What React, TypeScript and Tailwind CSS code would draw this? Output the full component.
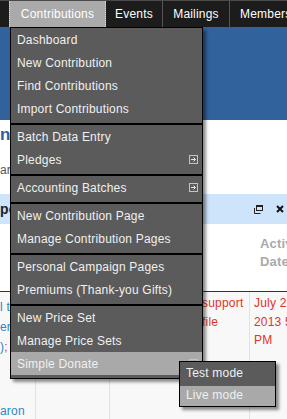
import React from "react";

type Item = { label: string; sub?: boolean; active?: boolean };

const groups: Item[][] = [
  [
    { label: "Dashboard" },
    { label: "New Contribution" },
    { label: "Find Contributions" },
    { label: "Import Contributions" },
  ],
  [{ label: "Batch Data Entry" }, { label: "Pledges", sub: true }],
  [{ label: "Accounting Batches", sub: true }],
  [{ label: "New Contribution Page" }, { label: "Manage Contribution Pages" }],
  [{ label: "Personal Campaign Pages" }, { label: "Premiums (Thank-you Gifts)" }],
  [
    { label: "New Price Set" },
    { label: "Manage Price Sets" },
    { label: "Simple Donate", sub: true, active: true },
  ],
];

function SubArrow() {
  return (
    <svg width="9" height="9" viewBox="0 0 9 9" className="block">
      <rect x="0.5" y="0.5" width="8" height="8" fill="none" stroke="#c4c4c4" />
      <path d="M2 4.5h4.5M4.5 2.5l2 2-2 2" fill="none" stroke="#e6e6e6" />
    </svg>
  );
}

function RestoreIcon() {
  return (
    <svg width="9" height="9" viewBox="0 0 9 9" className="block">
      <rect x="2.5" y="0.5" width="6" height="5" fill="none" stroke="#222" />
      <rect x="2.5" y="0.5" width="6" height="1.5" fill="#222" />
      <path d="M0.5 3v5.5h6" fill="none" stroke="#222" />
    </svg>
  );
}

function CloseIcon() {
  return (
    <svg width="8" height="8" viewBox="0 0 8 8" className="block">
      <path d="M1 1l6 6M7 1l-6 6" stroke="#111" strokeWidth="2" />
    </svg>
  );
}

export default function App() {
  return (
    <div className="relative h-[419px] w-[287px] overflow-hidden bg-white font-['Liberation_Sans',Arial,sans-serif] text-[12px] tracking-[0.2px]">
      {/* TOP NAV */}
      <div className="flex h-[27px] border-t border-[#4a4a4a] bg-[#1c1c1c] text-white">
        <div className="w-[9px] shrink-0" />
        <div className="flex w-[97px] shrink-0 items-center justify-center border-x border-dotted border-[#d8d8d8] bg-[#aaaaaa]">
          Contributions
        </div>
        <div className="flex w-[57px] shrink-0 items-center justify-center border-r border-[#555]">Events</div>
        <div className="flex w-[67px] shrink-0 items-center justify-center border-r border-[#555]">Mailings</div>
        <div className="flex shrink-0 items-center whitespace-nowrap pl-[10px]">Members</div>
      </div>

      {/* PAGE BEHIND THE MENU */}
      <div className="h-[93px] bg-[#31629b]" />
      <div className="pt-[4px] text-[17px] font-bold leading-[22px] text-[#2c5f97]">n</div>
      <div className="mt-[15px] leading-[18px] text-[#555]">ar</div>
      <div className="mt-[15px] flex h-[30px] items-center justify-between bg-[#cde4fa] pr-[3px]">
        <span className="text-[14px] font-bold text-[#222]">po</span>
        <div className="flex items-center gap-[13px]">
          <RestoreIcon />
          <CloseIcon />
        </div>
      </div>

      <div className="grid h-[68px] grid-cols-[36px_74px_140px_1fr] border-b border-[#333]">
        <div />
        <div />
        <div />
        <div className="whitespace-nowrap pl-[10px] pt-[11px] text-[13px] font-bold leading-[18px] text-[#aaaaaa]">
          <div>Active</div>
          <div>Date</div>
        </div>
      </div>

      <div className="grid h-[130px] grid-cols-[36px_74px_140px_1fr] bg-[#f8f8f8] leading-[20px]">
        <div className="whitespace-nowrap border-r border-[#e2e2e2] pt-[5px] text-[#2a87c6]">
          <div>l to</div>
          <div>ern</div>
          <div>
            )<span className="text-[#e0332a]">;</span>
          </div>
          <div className="mt-[44px]">aron</div>
        </div>
        <div className="border-r border-[#e2e2e2]" />
        <div className="border-r border-[#e2e2e2] pl-[92px] pt-[2px] leading-[18.5px] text-[#e0332a]">
          <div>support</div>
          <div>file</div>
        </div>
        <div className="whitespace-nowrap pl-[4px] pt-[2px] leading-[18.5px] text-[#e0332a]">
          <div>July 25,</div>
          <div>2013 5:40</div>
          <div>PM</div>
        </div>
      </div>

      {/* DROPDOWN MENU */}
      <div className="absolute left-[10px] top-[27px] w-[193px] border border-black bg-[#5b5b5b] text-[#f0f0f0] shadow-[3px_3px_3px_rgba(0,0,0,0.45)]">
        {groups.map((group, gi) => (
          <div
            key={gi}
            className={gi < groups.length - 1 ? "border-b-2 border-black pb-[3px]" : "pb-[3px]"}
          >
            {group.map((item) => (
              <div
                key={item.label}
                className={
                  "flex h-[23px] items-center justify-between whitespace-nowrap pl-[6px] pr-[4px] " +
                  (item.active ? "bg-[#a9a9a9]" : "")
                }
              >
                <span>{item.label}</span>
                {item.sub && <SubArrow />}
              </div>
            ))}
          </div>
        ))}
      </div>

      {/* SUBMENU */}
      <div className="absolute left-[179px] top-[361px] w-[97px] border border-black bg-[#5b5b5b] text-[#f0f0f0] shadow-[3px_3px_3px_rgba(0,0,0,0.45)]">
        <div className="flex h-[24px] items-center pb-[3px] pl-[6px]">Test mode</div>
        <div className="flex h-[20px] items-center bg-[#a9a9a9] pb-[2px] pl-[6px]">Live mode</div>
      </div>
    </div>
  );
}
